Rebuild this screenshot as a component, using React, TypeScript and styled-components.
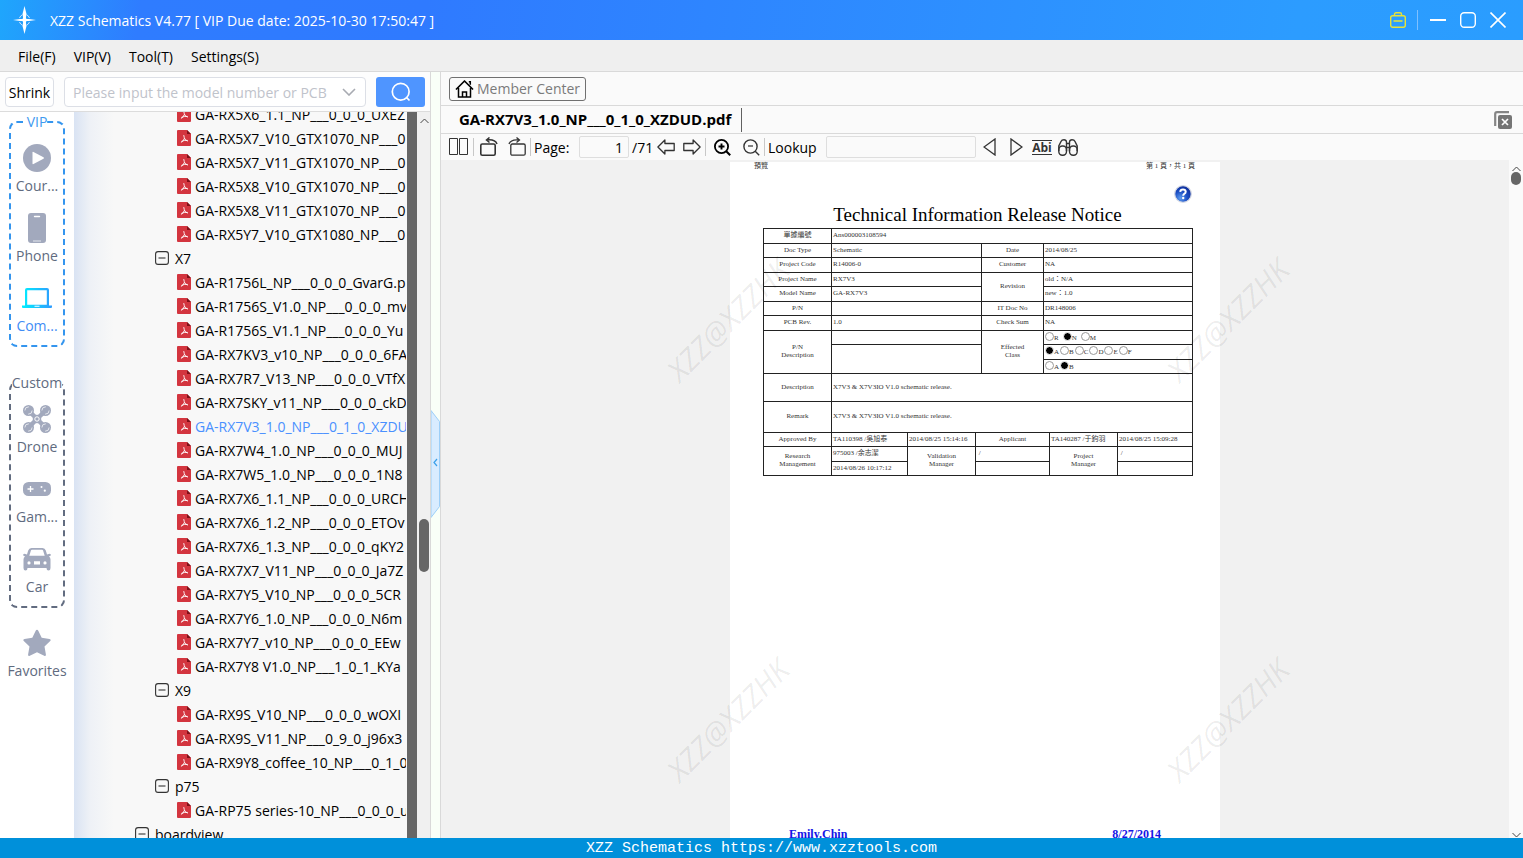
import React from "react";
import styled, { createGlobalStyle, css } from "styled-components";

const uiFont = `"Open Sans", "Noto Sans", "Noto Sans CJK SC", sans-serif`;
const docFont = `"Liberation Serif", "Noto Sans CJK TC", serif`;

const GlobalStyle = createGlobalStyle`
  * { box-sizing: border-box; }
  body { margin: 0; font-family: ${uiFont}; font-size: 14px; color: #000; }
  button, input { font: inherit; color: inherit; }
  button { background: none; border: 0; padding: 0; cursor: pointer; }
  svg { display: block; flex: none; }
  ul { list-style: none; margin: 0; padding: 0; }
`;

const Shell = styled.div`
  display: flex;
  flex-direction: column;
  height: 100vh;
  overflow: hidden;
  background: #f0f0f0;
`;

/* Title bar */
const TitleBar = styled.header`
  display: flex;
  align-items: center;
  flex: none;
  height: 40px;
  padding: 0 17px 0 12px;
  color: #fff;
  background: linear-gradient(100deg, #1fa6fc 0, #2f7cff 140px, #2f7aff 420px, #2c9cff 85%, #2a9dff 100%);
`;
const AppTitle = styled.h1`
  flex: 1;
  margin: 0 0 0 12px;
  font-size: 14px;
  font-weight: 400;
  white-space: nowrap;
`;
const WindowButtons = styled.div`
  display: flex;
  align-items: center;
  gap: 14px;
`;
const TitleDivider = styled.span`
  width: 1px;
  height: 20px;
  margin: 0 -2px 0 -3px;
  background: #7fc0ff;
`;

/* Menu bar */
const MenuBar = styled.nav`
  display: flex;
  align-items: center;
  flex: none;
  gap: 18px;
  height: 32px;
  padding: 2px 18px 0;
  border-bottom: 1px solid #d9d9d9;
  background: #efefef;
`;
const MenuButton = styled.button`
  line-height: 24px;
`;

const Body = styled.div`
  display: flex;
  flex: 1;
  min-height: 0;
`;

/* Left column */
const LeftColumn = styled.div`
  display: flex;
  flex-direction: column;
  flex: none;
  width: 431px;
  border-right: 1px solid #d9d9d9;
`;
const SearchBar = styled.form`
  display: flex;
  align-items: center;
  flex: none;
  gap: 10px;
  height: 40px;
  padding: 0 5px;
  background: #fdfdfd;
  border-bottom: 1px solid #dcdcdc;
`;
const ShrinkButton = styled.button`
  flex: none;
  width: 49px;
  height: 30px;
  padding-top: 1px;
  border: 1px solid #dcdfe6;
  border-radius: 4px;
  background: #fff;
`;
const SearchBox = styled.div`
  display: flex;
  align-items: center;
  flex: 1;
  min-width: 0;
  height: 30px;
  padding: 0 9px 0 8px;
  border: 1px solid #dcdfe6;
  border-radius: 4px;
  background: #fff;
`;
const SearchInput = styled.input`
  flex: 1;
  min-width: 0;
  padding: 1px 0 0;
  border: 0;
  outline: 0;
  background: transparent;
  &::placeholder { color: #bfc3cb; opacity: 1; }
`;
const SearchButton = styled.button`
  display: flex;
  align-items: center;
  justify-content: center;
  flex: none;
  width: 49px;
  height: 30px;
  border-radius: 3px;
  background: #4f95ff;
`;
const LeftBody = styled.div`
  display: flex;
  flex: 1;
  min-height: 0;
`;

/* Category rail */
const Rail = styled.nav`
  flex: none;
  width: 74px;
  background: #fff;
  color: #5f6b80;
`;
const RailGroup = styled.fieldset<{ $accent?: boolean }>`
  min-width: 0;
  margin: 0 9px 26px;
  padding: 6px 0 11px;
  border: 2px dashed ${(p) => (p.$accent ? "#3495ee" : "#626c80")};
  border-radius: 8px;
  & + & { margin-bottom: 15px; }
`;
const RailLegend = styled.legend<{ $accent?: boolean }>`
  margin: 0 auto;
  padding: 0;
  line-height: 20px;
  color: ${(p) => (p.$accent ? "#3f9af0" : "#5f6b80")};
`;
const RailList = styled.ul`
  display: flex;
  flex-direction: column;
  gap: 14px;
`;
const RailButton = styled.button<{ $active?: boolean }>`
  display: flex;
  flex-direction: column;
  align-items: center;
  width: 100%;
  height: 56px;
  line-height: 16px;
  color: ${(p) => (p.$active ? "#3f8df5" : "#5f6b80")};
`;
const RailIcon = styled.span`
  display: flex;
  align-items: center;
  justify-content: center;
  flex: none;
  height: 40px;
`;

/* Tree */
const TreePane = styled.div`
  flex: 1;
  min-width: 0;
  overflow: hidden;
  padding-right: 1px;
  background: linear-gradient(90deg, #d9e3f3 0, #eef1f6 16px, #f8f8f8 40px);
`;
const TreeList = styled.ul`
  margin-top: -10px;
  overflow: hidden;
`;
const TreeRow = styled.button<{ $indent: number; $gap: number; $selected?: boolean }>`
  display: flex;
  align-items: center;
  gap: ${(p) => p.$gap}px;
  width: 100%;
  height: 24px;
  padding-left: ${(p) => p.$indent}px;
  white-space: nowrap;
  overflow: hidden;
  ${(p) => p.$selected && css`color: #4a90ff;`}
`;
const TreeEdge = styled.div`
  flex: none;
  width: 10px;
  background: #666;
`;
const ScrollTrack = styled.div<{ $pale?: boolean }>`
  display: flex;
  flex-direction: column;
  align-items: center;
  flex: none;
  width: ${(p) => (p.$pale ? 14 : 13)}px;
  padding: 6px 0 0 ${(p) => (p.$pale ? 0 : 1)}px;
  background: ${(p) => (p.$pale ? "#fafafa" : "#f0f0f0")};
`;
const ScrollThumb = styled.div<{ $top: number; $height: number }>`
  flex: none;
  width: 10px;
  height: ${(p) => p.$height}px;
  margin-top: ${(p) => p.$top}px;
  border-radius: 6px;
  background: #666;
`;
const TrackSpacer = styled.div`
  flex: 1;
`;

/* Splitter */
const Splitter = styled.div`
  flex: none;
  width: 10px;
  padding-top: 338px;
  border-right: 1px solid #d9d9d9;
  background: #f9fff8;
`;

/* Document column */
const DocColumn = styled.main`
  display: flex;
  flex-direction: column;
  flex: 1;
  min-width: 0;
`;
const DocBar = styled.div<{ $height: number; $line?: boolean }>`
  display: flex;
  align-items: center;
  flex: none;
  height: ${(p) => p.$height}px;
  padding: 0 8px;
  background: #fafafa;
  border-bottom: ${(p) => (p.$line ? "1px solid #d9d9d9" : "0")};
`;
const MemberButton = styled.button`
  display: flex;
  align-items: center;
  gap: 3px;
  height: 24px;
  padding: 0 5px;
  border: 1px solid #707070;
  border-radius: 3px;
  color: #7a7a7a;
`;
const DocTab = styled.button`
  height: 24px;
  padding: 0 10px 2px;
  border-right: 1px solid #606060;
  font-size: 15px;
  font-weight: 700;
  white-space: nowrap;
`;
const CloseAll = styled.button`
  margin-left: auto;
  margin-right: 3px;
`;
const Tools = styled.div`
  display: flex;
  align-items: center;
  flex: 1;
  height: 22px;
`;
const ToolButton = styled.button<{ $width: number }>`
  display: flex;
  align-items: center;
  justify-content: center;
  flex: none;
  width: ${(p) => p.$width}px;
  height: 22px;
`;
const ToolDivider = styled.span`
  flex: none;
  width: 1px;
  height: 18px;
  background: #c8c8c8;
  &:first-of-type { margin-left: 5px; }
`;
const ToolLabel = styled.label<{ $width: number }>`
  flex: none;
  width: ${(p) => p.$width}px;
  padding-left: 3px;
  white-space: nowrap;
`;
const ToolInput = styled.input<{ $width: number }>`
  flex: none;
  width: ${(p) => p.$width}px;
  height: 22px;
  padding: 0 5px;
  border: 1px solid #dedede;
  border-radius: 2px;
  background: #fafafa;
  text-align: right;
`;
const AbiMark = styled.span`
  border-top: 1px solid #333;
  border-bottom: 1px solid #333;
  font-size: 12px;
  font-weight: 700;
  line-height: 13px;
  color: #333;
`;

/* Page view */
const Viewer = styled.div`
  display: flex;
  flex: 1;
  min-height: 0;
`;
const Canvas = styled.div`
  position: relative;
  display: flex;
  justify-content: center;
  flex: 1;
  min-width: 0;
  overflow: hidden;
  padding-top: 2px;
  background: #f1f1f1;
`;
const Sheet = styled.article`
  display: flex;
  flex-direction: column;
  width: 490px;
  background: #fff;
  color: #333;
  font-family: ${docFont};
  font-size: 7px;
`;
const SheetHead = styled.div`
  display: flex;
  justify-content: space-between;
  flex: none;
  padding: 0 25px 0 24px;
  line-height: 8px;
`;
const HelpRow = styled.div`
  display: flex;
  justify-content: flex-end;
  flex: none;
  margin-top: 15px;
  padding-right: 28px;
`;
const SheetTitle = styled.h2`
  flex: none;
  margin: 2px 0 3px;
  padding-left: 5px;
  font-size: 19px;
  font-weight: 400;
  line-height: 20px;
  text-align: center;
  color: #000;
`;
const NoticeTable = styled.table`
  flex: none;
  width: 430px;
  margin-left: 33px;
  border-collapse: collapse;
  table-layout: fixed;
  line-height: 8px;
`;
const Cell = styled.td`
  padding: 0 1px 2px;
  border: 1px solid #222;
  white-space: nowrap;
`;
const HeadCell = styled.th`
  padding: 0 0 2px;
  border: 1px solid #222;
  font-weight: 400;
  text-align: center;
`;
const Row = styled.tr<{ $height: number }>`
  height: ${(p) => p.$height}px;
`;
const Marks = styled.div`
  display: flex;
  gap: 1px;
`;
const Mark = styled.span<{ $wide?: boolean }>`
  margin-right: ${(p) => (p.$wide ? 3 : 0)}px;
  &::before {
    content: "";
    display: inline-block;
    width: 7px;
    height: 7px;
    border: 1px solid #999;
    border-radius: 50%;
    vertical-align: -1px;
  }
  &[data-on="true"]::before {
    border-color: #fff;
    background: #000;
  }
`;
const SignOff = styled.div`
  display: flex;
  justify-content: space-between;
  flex: none;
  margin-top: 350px;
  padding: 0 59px;
  font-size: 12px;
  font-weight: 700;
  line-height: 16px;
  color: #1414e6;
`;
const Watermark = styled.span<{ $x: number; $y: number }>`
  position: absolute;
  left: calc(50% + ${(p) => p.$x}px);
  top: ${(p) => p.$y}px;
  transform: translate(-50%, -50%) rotate(-45deg);
  font-size: 30px;
  font-style: italic;
  line-height: 30px;
  color: rgba(0, 0, 0, 0.08);
  pointer-events: none;
`;

const StatusBar = styled.footer`
  flex: none;
  height: 20px;
  background: #0090da;
  color: #fff;
  font-family: "Liberation Mono", monospace;
  font-size: 15px;
  line-height: 22px;
  text-align: center;
  white-space: pre;
`;

/* Icons */
const Svg = ({ w, h, box, children }: { w: number; h: number; box?: string; children: React.ReactNode }) => (
  <svg width={w} height={h} viewBox={box ?? `0 0 ${w} ${h}`} fill="none" aria-hidden="true">
    {children}
  </svg>
);

const LogoIcon = () => (
  <Svg w={26} h={30}>
    <path d="M12.500 1l2 8-1 6h-2l-1-6zM12.500 29l2-8-1-6h-2l-1 6z" fill="#fff" />
    <path d="M1 15l7-1h4v2H8zM24 15l-7-1h-4v2h4z" fill="#fff" />
    <path d="M12.500 10.500l1.500 3 3 1.500-3 1.500-1.500 3-1.500-3-3-1.500 3-1.500z" fill="#fff" />
    <path d="M7.500 13q1-2.500 3-3.300M17.500 13q-1-2.500-3-3.300M7.500 17q1 2.500 3 3.300M17.500 17q-1 2.500-3 3.300" stroke="#cfe6ff" />
  </Svg>
);
const BagIcon = () => (
  <Svg w={16} h={16}>
    <rect x="0.700" y="3.700" width="14.600" height="11.600" rx="2" stroke="#e8e337" strokeWidth="1.400" />
    <path d="M4.500 3.500V2.200a1.500 1.500 0 0 1 1.500-1.500h4a1.500 1.500 0 0 1 1.500 1.500v1.300M3.500 9h9" stroke="#e8e337" strokeWidth="1.400" />
  </Svg>
);
const MinIcon = () => <Svg w={16} h={16}><path d="M0 8h16" stroke="#fff" strokeWidth="2" /></Svg>;
const MaxIcon = () => <Svg w={16} h={16}><rect x=".7" y=".7" width="14.600" height="14.600" rx="3.500" stroke="#fff" strokeWidth="1.400" /></Svg>;
const CloseIcon = () => <Svg w={16} h={16}><path d="M.5.5l15 15M15.500.5l-15 15" stroke="#fff" strokeWidth="1.600" /></Svg>;
const ChevronIcon = () => <Svg w={14} h={8}><path d="M1 1l6 6 6-6" stroke="#a8abb2" strokeWidth="1.600" /></Svg>;
const SearchIcon = () => (
  <Svg w={20} h={20}>
    <circle cx="9.700" cy="9.700" r="8.400" stroke="#fff" strokeWidth="1.700" />
    <path d="M15.500 15.500l3 3" stroke="#fff" strokeWidth="1.700" />
  </Svg>
);
const grey = "#a2a9bd";
const PlayIcon = () => (
  <Svg w={28} h={28}>
    <circle cx="14" cy="14" r="14" fill={grey} />
    <path d="M9.500 8.500v11q0 1 1 .5l10-5.200q1-.8 0-1.600l-10-5.200q-1-.5-1 .5z" fill="#fff" />
  </Svg>
);
const PhoneIcon = () => (
  <Svg w={18} h={30}>
    <rect width="18" height="30" rx="3" fill={grey} />
    <path d="M6.500 3.500h5" stroke="#fff" strokeWidth="1.400" strokeLinecap="round" />
    <path d="M5 28h8" stroke="#e4e7ee" />
  </Svg>
);
const LaptopIcon = () => (
  <Svg w={30} h={20}>
    <defs>
      <linearGradient id="screen" x1="0" x2="1">
        <stop offset="0" stopColor="#00efff" />
        <stop offset="1" stopColor="#2f9bff" />
      </linearGradient>
    </defs>
    <path fillRule="evenodd" d="M5 0h20q2 0 2 2v15.500h3V19q0 1-1 1H1q-1 0-1-1v-1.500h3V2q0-2 2-2zM5.200 2.200v14.600h19.600V2.200zM12.500 17.800v.9h5v-.9z" fill="url(#screen)" />
  </Svg>
);
const DroneIcon = () => (
  <Svg w={28} h={28}>
    <path d="M6 6l16 16M22 6L6 22" stroke={grey} strokeWidth="4.500" />
    {[[5.500, 5.500], [22.500, 5.500], [5.500, 22.500], [22.500, 22.500]].map(([x, y]) => (
      <g key={`${x}-${y}`}>
        <circle cx={x} cy={y} r="5.500" fill={grey} />
        <circle cx={x} cy={y} r="3.600" stroke="#fff" strokeWidth=".7" strokeDasharray="6 5" />
      </g>
    ))}
    <circle cx="14" cy="14" r="4.300" fill={grey} />
    <circle cx="14" cy="14" r="2.200" stroke="#fff" strokeWidth="1" />
  </Svg>
);
const GameIcon = () => (
  <Svg w={28} h={14}>
    <rect width="28" height="14" rx="5.500" fill={grey} />
    <path d="M4.500 7h6M7.500 4v6" stroke="#fff" strokeWidth="1.300" />
    <circle cx="18.500" cy="5" r="1" fill="#fff" />
    <circle cx="21.800" cy="8.700" r="1.100" fill="#fff" />
  </Svg>
);
const CarIcon = () => (
  <Svg w={28} h={24}>
    <path fillRule="evenodd" d="M8.500 1h11q2.500 0 3.300 2.500L24 7.500l2.500-.8q1.500 0 1.500 1.600l-2 1.200q1.500 1 1.500 3V21q0 2.500-2 2.500t-2-2.500H4.500q0 2.500-2 2.500t-2-2.500v-8.500q0-2 1.500-3L0 8.300q0-1.600 1.500-1.600L4 7.500l1.200-4Q6 1 8.500 1zM8 3.200L6.300 8.800h15.400L20 3.200q-.2-.5-1-.5H9q-.8 0-1 .5zM6 14.300a1.500 1.500 0 1 0 0 3.200a1.500 1.500 0 1 0 0-3.200zM11 14.300v3.200h6v-3.200zM22 14.300a1.500 1.500 0 1 0 0 3.200a1.500 1.500 0 1 0 0-3.200z" fill={grey} />
  </Svg>
);
const StarIcon = () => (
  <Svg w={28} h={28}>
    <path d="M14 .8q.8 0 1.300 1l3.400 7 7.800 1.200q2 .5.700 2l-5.700 5.600 1.400 7.900q.1 2-1.700 1.300L14 23.200l-7.200 3.600q-1.800.7-1.700-1.300l1.400-7.900L.8 12q-1.300-1.500.7-2l7.800-1.200 3.400-7q.5-1 1.300-1z" fill={grey} />
  </Svg>
);
const PdfIcon = () => (
  <Svg w={14} h={16}>
    <path d="M1 0h9l4 4v11q0 1-1 1H1q-1 0-1-1V1q0-1 1-1z" fill="#d3353f" />
    <path d="M10 0l4 4h-4z" fill="#7e1119" />
    <path d="M6.800 5.500q.5 2.500 1 3.500t2.700 2M7.300 8.700q-.8 2.500-3 3.600M4.800 11.200q2.500-1.200 5.500-.8" stroke="#fff" strokeWidth=".9" strokeLinecap="round" />
  </Svg>
);
const CollapseIcon = () => (
  <Svg w={14} h={14}>
    <rect x=".6" y=".6" width="12.800" height="12.800" rx="2.500" stroke="#333" strokeWidth="1.100" />
    <path d="M3.500 7h7" stroke="#333" strokeWidth="1.100" />
  </Svg>
);
const ArrowUp = () => <Svg w={9} h={6}><path d="M.5 5l4-4 4 4" stroke="#444" /></Svg>;
const ArrowDown = () => <Svg w={9} h={6}><path d="M.5 1l4 4 4-4" stroke="#444" /></Svg>;
const HandleIcon = () => (
  <Svg w={9} h={108}>
    <path d="M0 .5l8.500 11v85L0 107.500z" fill="#d9ecff" stroke="#9dcff8" />
    <path d="M6 49l-3 3.500L6 56" stroke="#3aa0ea" strokeWidth="1.200" />
  </Svg>
);
const HomeIcon = () => (
  <Svg w={19} h={18}>
    <path d="M1 9.500L9.500 1l8.500 8.500" stroke="#000" strokeWidth="1.700" strokeLinejoin="round" />
    <path d="M3.500 8v9h12V8M7.500 17v-5h4v5M13.800 1.800h1.500v3" stroke="#000" strokeWidth="1.500" />
  </Svg>
);
const CloseAllIcon = () => (
  <Svg w={18} h={18}>
    <path d="M1.200 15V3q0-1.800 1.800-1.800h12" stroke="#858585" strokeWidth="2.200" />
    <rect x="4" y="4" width="14" height="14" rx="2" fill="#757575" />
    <path d="M8 8l6 6M14 8l-6 6" stroke="#fff" strokeWidth="1.700" />
  </Svg>
);
const ColumnsIcon = () => (
  <Svg w={19} h={18}>
    <path d="M.5.5h8v16h-8zM10.500.5h8v16h-8z" stroke="#333" />
  </Svg>
);
const RotateLeftIcon = () => (
  <Svg w={18} h={20}>
    <rect x=".8" y="7" width="14.400" height="11.200" rx="1.500" stroke="#333" strokeWidth="1.600" />
    <path d="M7 3q8-1 10 4M9.500 .5L6.500 3 9.500 5.500" stroke="#333" strokeWidth="1.500" />
  </Svg>
);
const RotateRightIcon = () => (
  <Svg w={18} h={20}>
    <rect x="2.800" y="7" width="14.400" height="11.200" rx="1.500" stroke="#333" strokeWidth="1.300" />
    <path d="M11 3Q3 2 1 7M8.500 .5L11.500 3 8.500 5.500" stroke="#333" strokeWidth="1.300" />
  </Svg>
);
const BlockArrow = ({ flip }: { flip?: boolean }) => (
  <Svg w={18} h={16}>
    <path
      d="M.9 8l7-7v3.500h9.300v7H7.900V15z"
      transform={flip ? "matrix(-1 0 0 1 18 0)" : undefined}
      stroke="#333"
      strokeWidth="1.300"
      strokeLinejoin="round"
    />
  </Svg>
);
const ZoomGlyph = ({ plus }: { plus?: boolean }) => (
  <Svg w={17} h={17}>
    <circle cx="7.500" cy="7.500" r="6.600" stroke={plus ? "#000" : "#333"} strokeWidth={plus ? 1.800 : 1.400} />
    <path d={plus ? "M4.500 7.500h6M7.500 4.500v6" : "M5 7h5"} stroke={plus ? "#000" : "#333"} strokeWidth={plus ? 1.900 : 1.200} />
    <path d="M12.200 12.200l4 4" stroke={plus ? "#000" : "#333"} strokeWidth={plus ? 2 : 1.400} />
  </Svg>
);
const Triangle = ({ flip }: { flip?: boolean }) => (
  <Svg w={13} h={18}>
    <path d={flip ? "M1 1l11 8L1 17z" : "M12 1L1 9l11 8z"} stroke="#333" strokeWidth="1.300" />
  </Svg>
);
const BinocularIcon = () => (
  <Svg w={20} h={17}>
    <path d="M.8 12V7L3 2.500Q3.800.8 6 .8t2.500 2.200v9M19.200 12V7L17 2.500Q16.200.8 14 .8t-2.500 2.200v9M8.500 4.500h3M8.500 8.500h3" stroke="#333" strokeWidth="1.400" />
    <rect x=".8" y="7" width="7.700" height="9.200" rx="3.600" stroke="#333" strokeWidth="1.400" />
    <rect x="11.500" y="7" width="7.700" height="9.200" rx="3.600" stroke="#333" strokeWidth="1.400" />
  </Svg>
);
const HelpIcon = () => (
  <Svg w={18} h={18}>
    <defs>
      <radialGradient id="ball" cx=".35" cy=".75" r=".8">
        <stop offset="0" stopColor="#5f9df0" />
        <stop offset=".5" stopColor="#1c4fc4" />
        <stop offset="1" stopColor="#0d2a96" />
      </radialGradient>
    </defs>
    <circle cx="9" cy="9" r="8.300" fill="url(#ball)" stroke="#d5d9e4" strokeWidth="1.200" />
    <path d="M6.200 6.800Q6.500 4.600 9 4.600t2.700 2.100Q11.700 8 10.200 8.800 9.200 9.400 9.200 10.700" stroke="#fff" strokeWidth="2" />
    <circle cx="9.200" cy="13" r="1.200" fill="#fff" />
  </Svg>
);

/* Data */
const vipItems = [
  { label: "Cour...", icon: <PlayIcon /> },
  { label: "Phone", icon: <PhoneIcon /> },
  { label: "Com...", icon: <LaptopIcon />, active: true },
];
const customItems = [
  { label: "Drone", icon: <DroneIcon /> },
  { label: "Gam...", icon: <GameIcon /> },
  { label: "Car", icon: <CarIcon /> },
];

type Node = { name: string; kind: "file" | "folder" | "root" };
const file = (name: string): Node => ({ name, kind: "file" });
const folder = (name: string): Node => ({ name, kind: "folder" });

const tree: Node[] = [
  file("GA-RX5X6_1.1_NP___0_0_0_UXEZ"),
  file("GA-RX5X7_V10_GTX1070_NP___0"),
  file("GA-RX5X7_V11_GTX1070_NP___0"),
  file("GA-RX5X8_V10_GTX1070_NP___0"),
  file("GA-RX5X8_V11_GTX1070_NP___0"),
  file("GA-RX5Y7_V10_GTX1080_NP___0"),
  folder("X7"),
  file("GA-R1756L_NP___0_0_0_GvarG.p"),
  file("GA-R1756S_V1.0_NP___0_0_0_mv"),
  file("GA-R1756S_V1.1_NP___0_0_0_Yu"),
  file("GA-RX7KV3_v10_NP___0_0_0_6FA"),
  file("GA-RX7R7_V13_NP___0_0_0_VTfX"),
  file("GA-RX7SKY_v11_NP___0_0_0_ckD"),
  file("GA-RX7V3_1.0_NP___0_1_0_XZDU"),
  file("GA-RX7W4_1.0_NP___0_0_0_MUJ"),
  file("GA-RX7W5_1.0_NP___0_0_0_1N8"),
  file("GA-RX7X6_1.1_NP___0_0_0_URCH"),
  file("GA-RX7X6_1.2_NP___0_0_0_ETOv"),
  file("GA-RX7X6_1.3_NP___0_0_0_qKY2"),
  file("GA-RX7X7_V11_NP___0_0_0_Ja7Z"),
  file("GA-RX7Y5_V10_NP___0_0_0_5CR"),
  file("GA-RX7Y6_1.0_NP___0_0_0_N6m"),
  file("GA-RX7Y7_v10_NP___0_0_0_EEw"),
  file("GA-RX7Y8 V1.0_NP___1_0_1_KYa"),
  folder("X9"),
  file("GA-RX9S_V10_NP___0_0_0_wOXI"),
  file("GA-RX9S_V11_NP___0_9_0_j96x3"),
  file("GA-RX9Y8_coffee_10_NP___0_1_0"),
  folder("p75"),
  file("GA-RP75 series-10_NP___0_0_0_u"),
  { name: "boardview", kind: "root" },
];
const indents = { file: 103, folder: 81, root: 61 };
const columns = [68, 76, 68, 6, 62, 6, 68, 75];

const Notice = () => (
  <NoticeTable>
    <colgroup>
      {columns.map((w, i) => <col key={i} width={w} />)}
    </colgroup>
    <tbody>
      <Row $height={15}><HeadCell>單據編號</HeadCell><Cell colSpan={7}>Ans000003108594</Cell></Row>
      <Row $height={14}><HeadCell>Doc Type</HeadCell><Cell colSpan={3}>Schematic</Cell><HeadCell>Date</HeadCell><Cell colSpan={3}>2014/08/25</Cell></Row>
      <Row $height={15}><HeadCell>Project Code</HeadCell><Cell colSpan={3}>R14006-0</Cell><HeadCell>Customer</HeadCell><Cell colSpan={3}>NA</Cell></Row>
      <Row $height={14}><HeadCell>Project Name</HeadCell><Cell colSpan={3}>RX7V3</Cell><HeadCell rowSpan={2}>Revision</HeadCell><Cell colSpan={3}>old：N/A</Cell></Row>
      <Row $height={15}><HeadCell>Model Name</HeadCell><Cell colSpan={3}>GA-RX7V3</Cell><Cell colSpan={3}>new：1.0</Cell></Row>
      <Row $height={14}><HeadCell>P/N</HeadCell><Cell colSpan={3} /><HeadCell>IT Doc No</HeadCell><Cell colSpan={3}>DR148006</Cell></Row>
      <Row $height={15}><HeadCell>PCB Rev.</HeadCell><Cell colSpan={3}>1.0</Cell><HeadCell>Check Sum</HeadCell><Cell colSpan={3}>NA</Cell></Row>
      <Row $height={14}><HeadCell rowSpan={3}>P/N<br />Description</HeadCell><Cell colSpan={3} /><HeadCell rowSpan={3}>Effected<br />Class</HeadCell><Cell colSpan={3}><Marks><Mark $wide>R</Mark><Mark $wide data-on="true">N</Mark><Mark>M</Mark></Marks></Cell></Row>
      <Row $height={15}><Cell colSpan={3} rowSpan={2} /><Cell colSpan={3}><Marks><Mark data-on="true">A</Mark><Mark>B</Mark><Mark>C</Mark><Mark>D</Mark><Mark>E</Mark><Mark>F</Mark></Marks></Cell></Row>
      <Row $height={14}><Cell colSpan={3}><Marks><Mark>A</Mark><Mark data-on="true">B</Mark></Marks></Cell></Row>
      <Row $height={28}><HeadCell>Description</HeadCell><Cell colSpan={7}>X7V3 &amp; X7V3IO V1.0 schematic release.</Cell></Row>
      <Row $height={31}><HeadCell>Remark</HeadCell><Cell colSpan={7}>X7V3 &amp; X7V3IO V1.0 schematic release.</Cell></Row>
      <Row $height={14}><HeadCell>Approved By</HeadCell><Cell>TA110398 /吳旭泰</Cell><Cell>2014/08/25 15:14:16</Cell><HeadCell colSpan={3}>Applicant</HeadCell><Cell>TA140287 /于鈞羽</Cell><Cell>2014/08/25 15:09:28</Cell></Row>
      <Row $height={15}><HeadCell rowSpan={2}>Research<br />Management</HeadCell><Cell>975003 /余志潔</Cell><HeadCell rowSpan={2}>Validation<br />Manager</HeadCell><Cell colSpan={3}>&nbsp;/</Cell><HeadCell rowSpan={2}>Project<br />Manager</HeadCell><Cell>&nbsp;/</Cell></Row>
      <Row $height={14}><Cell>2014/08/26 10:17:12</Cell><Cell colSpan={3} /><Cell /></Row>
    </tbody>
  </NoticeTable>
);

const RailItem = ({ label, icon, active }: { label: string; icon: React.ReactNode; active?: boolean }) => (
  <RailButton type="button" $active={active}>
    <RailIcon>{icon}</RailIcon>
    {label}
  </RailButton>
);

export default function App() {
  return (
    <Shell>
      <GlobalStyle />
      <TitleBar>
        <LogoIcon />
        <AppTitle>XZZ Schematics V4.77 [ VIP Due date: 2025-10-30 17:50:47 ]</AppTitle>
        <WindowButtons>
          <button type="button" aria-label="Toolbox"><BagIcon /></button>
          <TitleDivider />
          <button type="button" aria-label="Minimize"><MinIcon /></button>
          <button type="button" aria-label="Maximize"><MaxIcon /></button>
          <button type="button" aria-label="Close"><CloseIcon /></button>
        </WindowButtons>
      </TitleBar>
      <MenuBar>
        {["File(F)", "VIP(V)", "Tool(T)", "Settings(S)"].map((m) => (
          <MenuButton type="button" key={m}>{m}</MenuButton>
        ))}
      </MenuBar>
      <Body>
        <LeftColumn>
          <SearchBar onSubmit={(e) => e.preventDefault()}>
            <ShrinkButton type="button">Shrink</ShrinkButton>
            <SearchBox>
              <SearchInput aria-label="Model number" placeholder="Please input the model number or PCB" />
              <button type="button" aria-label="Show history"><ChevronIcon /></button>
            </SearchBox>
            <SearchButton type="submit" aria-label="Search"><SearchIcon /></SearchButton>
          </SearchBar>
          <LeftBody>
            <Rail>
              <RailGroup $accent>
                <RailLegend $accent>VIP</RailLegend>
                <RailList>
                  {vipItems.map((i) => <li key={i.label}><RailItem {...i} /></li>)}
                </RailList>
              </RailGroup>
              <RailGroup>
                <RailLegend>Custom</RailLegend>
                <RailList>
                  {customItems.map((i) => <li key={i.label}><RailItem {...i} /></li>)}
                </RailList>
              </RailGroup>
              <RailItem label="Favorites" icon={<StarIcon />} />
            </Rail>
            <TreePane>
              <TreeList>
                {tree.map((n) => (
                  <li key={n.name}>
                    <TreeRow
                      type="button"
                      $indent={indents[n.kind]}
                      $gap={n.kind === "file" ? 4 : 6}
                      $selected={n.name.startsWith("GA-RX7V3")}
                    >
                      {n.kind === "file" ? <PdfIcon /> : <CollapseIcon />}
                      {n.name}
                    </TreeRow>
                  </li>
                ))}
              </TreeList>
            </TreePane>
            <TreeEdge />
            <ScrollTrack>
              <ArrowUp />
              <ScrollThumb $top={395} $height={53} />
            </ScrollTrack>
          </LeftBody>
        </LeftColumn>
        <Splitter>
          <button type="button" aria-label="Collapse panel"><HandleIcon /></button>
        </Splitter>
        <DocColumn>
          <DocBar $height={34} $line>
            <MemberButton type="button"><HomeIcon />Member Center</MemberButton>
          </DocBar>
          <DocBar $height={28} $line>
            <DocTab type="button">GA-RX7V3_1.0_NP___0_1_0_XZDUD.pdf</DocTab>
            <CloseAll type="button" aria-label="Close all"><CloseAllIcon /></CloseAll>
          </DocBar>
          <DocBar $height={26}>
            <Tools>
              <ToolButton type="button" $width={19} aria-label="Two columns"><ColumnsIcon /></ToolButton>
              <ToolDivider />
              <ToolButton type="button" $width={30} aria-label="Rotate left"><RotateLeftIcon /></ToolButton>
              <ToolButton type="button" $width={26} aria-label="Rotate right"><RotateRightIcon /></ToolButton>
              <ToolDivider />
              <ToolLabel $width={48} htmlFor="page">Page:</ToolLabel>
              <ToolInput $width={50} id="page" defaultValue="1" />
              <ToolLabel $width={24} as="span">/71</ToolLabel>
              <ToolButton type="button" $width={26} aria-label="Previous page"><BlockArrow /></ToolButton>
              <ToolButton type="button" $width={26} aria-label="Next page"><BlockArrow flip /></ToolButton>
              <ToolDivider />
              <ToolButton type="button" $width={32} aria-label="Zoom in"><ZoomGlyph plus /></ToolButton>
              <ToolButton type="button" $width={26} aria-label="Zoom out"><ZoomGlyph /></ToolButton>
              <ToolDivider />
              <ToolLabel $width={61} htmlFor="lookup">Lookup</ToolLabel>
              <ToolInput $width={150} id="lookup" />
              <ToolButton type="button" $width={27} aria-label="Find previous"><Triangle /></ToolButton>
              <ToolButton type="button" $width={26} aria-label="Find next"><Triangle flip /></ToolButton>
              <ToolButton type="button" $width={26} aria-label="Match whole word"><AbiMark>Abi</AbiMark></ToolButton>
              <ToolButton type="button" $width={26} aria-label="Find all"><BinocularIcon /></ToolButton>
            </Tools>
          </DocBar>
          <Viewer>
            <Canvas>
              <Sheet>
                <SheetHead><span>預覽</span><span>第 1 頁，共 1 頁</span></SheetHead>
                <HelpRow><HelpIcon /></HelpRow>
                <SheetTitle>Technical Information Release Notice</SheetTitle>
                <Notice />
                <SignOff><span>Emily.Chin</span><span>8/27/2014</span></SignOff>
              </Sheet>
              <Watermark $x={-247} $y={160}>XZZ@XZZHK</Watermark>
              <Watermark $x={253} $y={160}>XZZ@XZZHK</Watermark>
              <Watermark $x={-247} $y={560}>XZZ@XZZHK</Watermark>
              <Watermark $x={253} $y={560}>XZZ@XZZHK</Watermark>
            </Canvas>
            <ScrollTrack $pale>
              <ArrowUp />
              <ScrollThumb $top={0} $height={13} />
              <TrackSpacer />
              <ArrowDown />
            </ScrollTrack>
          </Viewer>
        </DocColumn>
      </Body>
      <StatusBar>XZZ Schematics https://www.xzztools.com</StatusBar>
    </Shell>
  );
}
